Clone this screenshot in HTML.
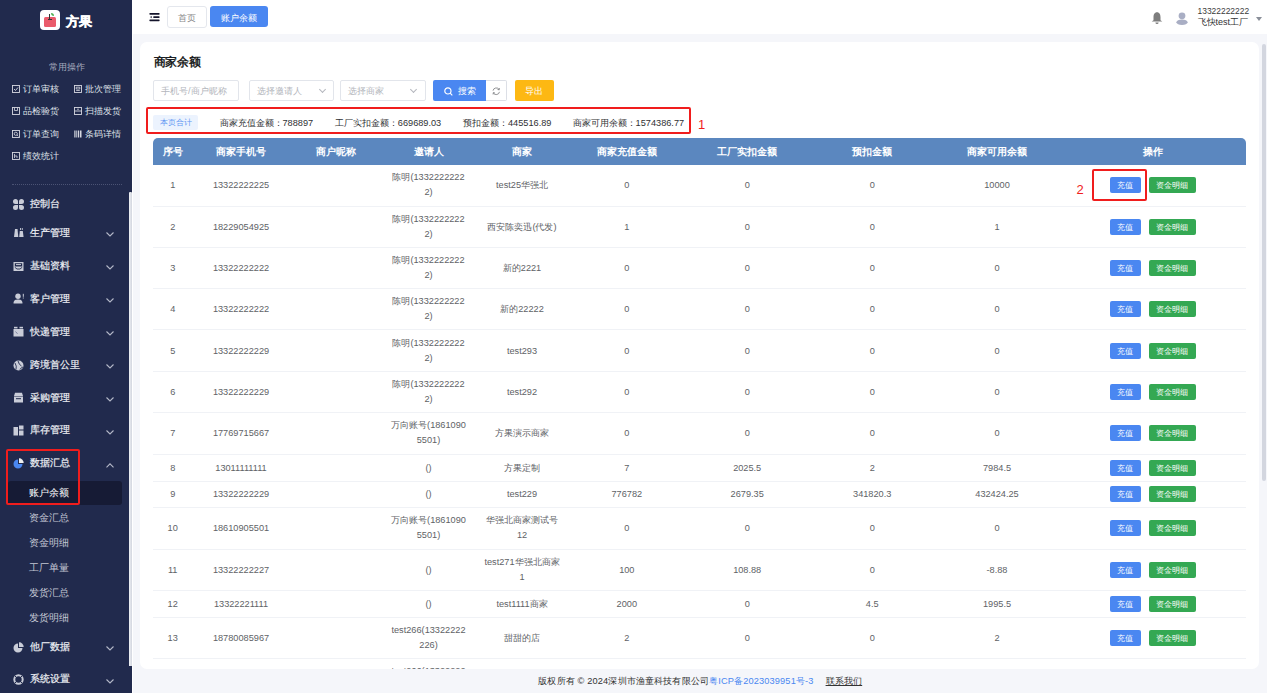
<!DOCTYPE html>
<html><head><meta charset="utf-8">
<style>
*{margin:0;padding:0;box-sizing:border-box}
html,body{width:1267px;height:693px;overflow:hidden;background:#f5f6fa;font-family:"Liberation Sans",sans-serif;color:#606266}
.abs{position:absolute}
#side{position:absolute;left:0;top:0;width:132px;height:693px;background:#212a4d;overflow:hidden}
#side .t{position:absolute;white-space:nowrap;line-height:12px}
.qo{font-size:9.3px;color:#dfe1e8}
.mi{font-size:9.9px;color:#eceef3;left:30.3px;-webkit-text-stroke:0.2px #eceef3}
.si{font-size:9.6px;color:#c9ccd8;left:29.3px}
.chev{position:absolute;left:107px;width:7px;height:7px;border-right:1px solid #aab0c4;border-bottom:1px solid #aab0c4;transform:rotate(45deg)}
#hdr{position:absolute;left:132px;top:0;width:1135px;height:33.5px;background:#fff}
#card{position:absolute;left:140px;top:42px;width:1119px;height:626.5px;background:#fff;border-radius:7px;overflow:hidden}
.inp{position:absolute;top:38.3px;height:21.2px;border:1px solid #e2e5eb;border-radius:2px;background:#fff;font-size:9.2px;color:#b3b6bc;line-height:21px;padding-left:7px;white-space:nowrap}
.tbl{position:absolute;left:13px;top:96.3px;width:1093px}
.th{position:absolute;left:0;top:0;width:1093px;height:26.4px;background:#5b87bf;border-radius:5px 5px 0 0;color:#fff;font-weight:bold;font-size:9.9px}
.th .c{top:1px;height:26.4px;line-height:26.4px}
.c{position:absolute;text-align:center;white-space:nowrap}
.tr{position:absolute;left:0;width:1093px;border-bottom:1px solid #f0f2f6;font-size:9.2px;color:#606266}
.tr .c{top:50%;transform:translateY(-50%);line-height:15px}
.ops{position:absolute;left:956.5px;top:50%;transform:translateY(-50%);height:16px;white-space:nowrap;font-size:0}
.b{display:inline-block;height:16px;line-height:16px;font-size:8.4px;color:#fff;border-radius:2px;text-align:center;vertical-align:top}
.bb{width:31px;background:#4a87f1}
.bg{width:46.7px;background:#34a853;margin-left:8.5px}
.red{position:absolute;border:2px solid #f01d1d;border-radius:2px}
</style></head><body>
<div id="side">
  <!-- logo -->
  <div class="abs" style="left:40px;top:10px;width:20px;height:20px;background:#fff;border-radius:4px"></div>
  <div class="abs" style="left:44px;top:16.5px;width:11.5px;height:10px;background:#ea5b6b;border-radius:1.5px"></div>
  <div class="abs" style="left:49px;top:13.5px;width:1.3px;height:5px;background:#333"></div>
  <div class="abs" style="left:47.5px;top:18.5px;width:4.5px;height:1px;background:#333"></div>
  <div class="abs" style="left:50.5px;top:13px;width:3.5px;height:2.5px;background:#4caf50;border-radius:0 3px 0 3px"></div>
  <div class="t" style="left:65.5px;top:15px;font-size:13px;font-weight:bold;color:#fff;line-height:14px;-webkit-text-stroke:0.45px #fff">方果</div>
  <div class="t" style="left:49px;top:61px;font-size:9.2px;color:#a4a9bd">常用操作</div>
  <svg class="abs" style="left:12px;top:85.0px" width="8" height="8" viewBox="0 0 8 8"><rect x="0.5" y="0.5" width="7" height="7" fill="none" stroke="#d5d7e0" stroke-width="0.9"/><path d="M2 4 L3.5 5.5 L6 2.5" fill="none" stroke="#d5d7e0" stroke-width="0.9"/></svg>
<div class="t qo" style="left:22.5px;top:83.0px">订单审核</div>
<svg class="abs" style="left:74px;top:85.0px" width="8" height="8" viewBox="0 0 8 8"><rect x="0.5" y="0.5" width="7" height="7" fill="none" stroke="#d5d7e0" stroke-width="0.9"/><path d="M2.2 2.2 H5.8 V4 H2.2Z M2.2 5.5 H5.8" fill="none" stroke="#d5d7e0" stroke-width="0.8"/></svg>
<div class="t qo" style="left:84.5px;top:83.0px">批次管理</div>
<svg class="abs" style="left:12px;top:107.4px" width="8" height="8" viewBox="0 0 8 8"><rect x="0.5" y="0.5" width="7" height="7" fill="none" stroke="#d5d7e0" stroke-width="0.9"/><path d="M2.5 0.5 V3.5 H5.5 V0.5" fill="none" stroke="#d5d7e0" stroke-width="0.8"/></svg>
<div class="t qo" style="left:22.5px;top:105.4px">品检验货</div>
<svg class="abs" style="left:74px;top:107.4px" width="8" height="8" viewBox="0 0 8 8"><rect x="0.5" y="0.5" width="7" height="7" fill="none" stroke="#d5d7e0" stroke-width="0.9"/><path d="M0.5 4 H7.5" stroke="#d5d7e0" stroke-width="0.9"/><path d="M3 2.2 H5" stroke="#d5d7e0" stroke-width="0.8"/></svg>
<div class="t qo" style="left:84.5px;top:105.4px">扫描发货</div>
<svg class="abs" style="left:12px;top:129.6px" width="8" height="8" viewBox="0 0 8 8"><rect x="0.5" y="0.5" width="7" height="7" fill="none" stroke="#d5d7e0" stroke-width="0.9"/><circle cx="3.8" cy="3.8" r="1.6" fill="none" stroke="#d5d7e0" stroke-width="0.8"/><path d="M5 5 L6.3 6.3" stroke="#d5d7e0" stroke-width="0.8"/></svg>
<div class="t qo" style="left:22.5px;top:127.6px">订单查询</div>
<svg class="abs" style="left:74px;top:129.6px" width="8" height="8" viewBox="0 0 8 8"><rect x="0.3" y="0.5" width="1.2" height="7" fill="#d5d7e0"/><rect x="2.3" y="0.5" width="0.8" height="7" fill="#d5d7e0"/><rect x="3.8" y="0.5" width="1.4" height="7" fill="#d5d7e0"/><rect x="6" y="0.5" width="1.5" height="7" fill="#d5d7e0"/></svg>
<div class="t qo" style="left:84.5px;top:127.6px">条码详情</div>
<svg class="abs" style="left:12px;top:152.0px" width="8" height="8" viewBox="0 0 8 8"><rect x="0.5" y="0.5" width="7" height="7" fill="none" stroke="#d5d7e0" stroke-width="0.9"/><path d="M2.5 2 V6 M2.5 4 H5 V6" fill="none" stroke="#d5d7e0" stroke-width="0.8"/></svg>
<div class="t qo" style="left:22.5px;top:150.0px">绩效统计</div>
  <div class="abs" style="left:12px;top:184px;width:110px;border-top:1px dotted #4b5374"></div>
  <div class="abs" style="left:7.5px;top:480.5px;width:114.5px;height:24.5px;background:#161b35;border-radius:3px"></div>
<svg class="abs" style="left:13.2px;top:198.5px" width="11" height="11" viewBox="0 0 11 11"><path d="M5 5 H2.5 A2.5 2.5 0 1 1 5 2.5Z M6 5 V2.5 A2.5 2.5 0 1 1 8.5 5Z M5 6 V8.5 A2.5 2.5 0 1 1 2.5 6Z M6 6 H8.5 A2.5 2.5 0 1 1 6 8.5Z" fill="#c9ccd8"/></svg>
<div class="t mi" style="top:197.8px">控制台</div>
<svg class="abs" style="left:13.2px;top:227.4px" width="11" height="11" viewBox="0 0 11 11"><path d="M1 10 L2 2 L4.5 2 L5.3 10Z" fill="#c9ccd8"/><path d="M6.2 10 L6.8 4 L9.8 4 L10.6 10Z" fill="#c9ccd8"/><rect x="7" y="1" width="0.9" height="2" fill="#c9ccd8"/><rect x="8.8" y="1" width="0.9" height="2" fill="#c9ccd8"/></svg>
<div class="t mi" style="top:226.7px">生产管理</div>
<svg class="abs" style="left:105.9px;top:232.1px" width="8" height="5" viewBox="0 0 8 5"><path d="M0.5 0.5 L4 4 L7.5 0.5" fill="none" stroke="#b4b8c8" stroke-width="1.1"/></svg>
<svg class="abs" style="left:13.2px;top:260.6px" width="11" height="11" viewBox="0 0 11 11"><path d="M0.5 1 H10.5 V10 H0.5Z M1.8 2.2 V5.5 H9.2 V2.2Z" fill="#c9ccd8" fill-rule="evenodd"/><path d="M3 3.6 H8" stroke="#c9ccd8" stroke-width="1"/><path d="M1.8 6.3 L4 8 H7 L9.2 6.3" fill="none" stroke="#212a4d" stroke-width="0.9"/></svg>
<div class="t mi" style="top:259.9px">基础资料</div>
<svg class="abs" style="left:105.9px;top:265.3px" width="8" height="5" viewBox="0 0 8 5"><path d="M0.5 0.5 L4 4 L7.5 0.5" fill="none" stroke="#b4b8c8" stroke-width="1.1"/></svg>
<svg class="abs" style="left:13.2px;top:293.3px" width="11" height="11" viewBox="0 0 11 11"><circle cx="5" cy="3.2" r="2.7" fill="#c9ccd8"/><path d="M0.5 10.5 C0.5 7 2.5 6.5 5 6.5 C7.5 6.5 9.5 7 9.5 10.5Z" fill="#c9ccd8"/><rect x="9.8" y="0.8" width="1" height="3" fill="#c9ccd8"/><rect x="9.8" y="4.5" width="1" height="1" fill="#c9ccd8"/></svg>
<div class="t mi" style="top:292.6px">客户管理</div>
<svg class="abs" style="left:105.9px;top:298.0px" width="8" height="5" viewBox="0 0 8 5"><path d="M0.5 0.5 L4 4 L7.5 0.5" fill="none" stroke="#b4b8c8" stroke-width="1.1"/></svg>
<svg class="abs" style="left:13.2px;top:326.4px" width="11" height="11" viewBox="0 0 11 11"><rect x="0.5" y="3" width="10" height="7.5" fill="#c9ccd8"/><rect x="1" y="0.8" width="3.5" height="1.6" fill="#c9ccd8"/><rect x="6.5" y="0.8" width="3.5" height="1.6" fill="#c9ccd8"/><path d="M2.5 5.5 L4.5 7.8" stroke="#6a7090" stroke-width="0.8"/></svg>
<div class="t mi" style="top:325.7px">快递管理</div>
<svg class="abs" style="left:105.9px;top:331.1px" width="8" height="5" viewBox="0 0 8 5"><path d="M0.5 0.5 L4 4 L7.5 0.5" fill="none" stroke="#b4b8c8" stroke-width="1.1"/></svg>
<svg class="abs" style="left:13.2px;top:359.5px" width="11" height="11" viewBox="0 0 11 11"><circle cx="5.5" cy="5.5" r="5" fill="#c9ccd8"/><path d="M2 3 Q4 6 3 9.5 M5 1 Q6 5 8.5 6 M7 9.5 Q8 7.5 10 7" fill="none" stroke="#212a4d" stroke-width="0.9"/></svg>
<div class="t mi" style="top:358.8px">跨境首公里</div>
<svg class="abs" style="left:105.9px;top:364.2px" width="8" height="5" viewBox="0 0 8 5"><path d="M0.5 0.5 L4 4 L7.5 0.5" fill="none" stroke="#b4b8c8" stroke-width="1.1"/></svg>
<svg class="abs" style="left:13.2px;top:392.3px" width="11" height="11" viewBox="0 0 11 11"><path d="M1 4 L2 0.8 H9 L10 4Z" fill="#c9ccd8"/><rect x="1" y="4.5" width="9" height="6" fill="#c9ccd8"/><rect x="3" y="6.2" width="5" height="1" fill="#212a4d"/></svg>
<div class="t mi" style="top:391.6px">采购管理</div>
<svg class="abs" style="left:105.9px;top:397.0px" width="8" height="5" viewBox="0 0 8 5"><path d="M0.5 0.5 L4 4 L7.5 0.5" fill="none" stroke="#b4b8c8" stroke-width="1.1"/></svg>
<svg class="abs" style="left:13.2px;top:425.1px" width="11" height="11" viewBox="0 0 11 11"><rect x="0.5" y="2" width="4.5" height="8.5" fill="#c9ccd8"/><rect x="6" y="0.5" width="4.5" height="4" fill="#c9ccd8"/><rect x="6" y="5.5" width="4.5" height="5" fill="#c9ccd8"/></svg>
<div class="t mi" style="top:424.4px">库存管理</div>
<svg class="abs" style="left:105.9px;top:429.8px" width="8" height="5" viewBox="0 0 8 5"><path d="M0.5 0.5 L4 4 L7.5 0.5" fill="none" stroke="#b4b8c8" stroke-width="1.1"/></svg>
<svg class="abs" style="left:13.2px;top:458.0px" width="11" height="11" viewBox="0 0 11 11"><path d="M5 1.5 A4.5 4.5 0 1 0 9.5 6 L5 6Z" fill="#4a87f1"/><path d="M6 0.3 A4.6 4.6 0 0 1 10.7 5 L6 5Z" fill="#f0f0f0"/></svg>
<div class="t mi" style="top:457.3px">数据汇总</div>
<svg class="abs" style="left:105.9px;top:462.7px" width="8" height="5" viewBox="0 0 8 5"><path d="M0.5 4.4 L4 0.9 L7.5 4.4" fill="none" stroke="#b4b8c8" stroke-width="1.1"/></svg>
<svg class="abs" style="left:13.2px;top:641.5px" width="11" height="11" viewBox="0 0 11 11"><path d="M5 1.5 A4.5 4.5 0 1 0 9.5 6 L5 6Z" fill="#c9ccd8"/><path d="M6 0.3 A4.6 4.6 0 0 1 10.7 5 L6 5Z" fill="#c9ccd8"/></svg>
<div class="t mi" style="top:640.8px">他厂数据</div>
<svg class="abs" style="left:105.9px;top:646.2px" width="8" height="5" viewBox="0 0 8 5"><path d="M0.5 0.5 L4 4 L7.5 0.5" fill="none" stroke="#b4b8c8" stroke-width="1.1"/></svg>
<svg class="abs" style="left:13.2px;top:673.9px" width="11" height="11" viewBox="0 0 11 11"><circle cx="5.5" cy="5.5" r="4.2" fill="none" stroke="#c9ccd8" stroke-width="2"/><path d="M2 2 L3.5 3.5 M9 2 L7.5 3.5 M2 9 L3.5 7.5 M9 9 L7.5 7.5" stroke="#212a4d" stroke-width="1"/></svg>
<div class="t mi" style="top:673.2px">系统设置</div>
<svg class="abs" style="left:105.9px;top:678.6px" width="8" height="5" viewBox="0 0 8 5"><path d="M0.5 0.5 L4 4 L7.5 0.5" fill="none" stroke="#b4b8c8" stroke-width="1.1"/></svg>
<div class="t si" style="top:486.9px;color:#ffffff">账户余额</div>
<div class="t si" style="top:511.9px;color:#c3c7d4">资金汇总</div>
<div class="t si" style="top:536.9px;color:#c3c7d4">资金明细</div>
<div class="t si" style="top:561.9px;color:#c3c7d4">工厂单量</div>
<div class="t si" style="top:586.8px;color:#c3c7d4">发货汇总</div>
<div class="t si" style="top:611.8px;color:#c3c7d4">发货明细</div>
  <div class="abs" style="left:129.2px;top:191.5px;width:2.7px;height:474.2px;background:linear-gradient(90deg,#eef0f4,#d3d6df);border-radius:1px 1px 0 0"></div>
  <div class="red" style="left:6px;top:448.5px;width:74px;height:56px"></div>
</div>
<div class="abs" style="left:132px;top:0;width:1.2px;height:693px;background:#fff"></div>
<div id="hdr">
  <svg class="abs" style="left:17px;top:12px" width="11" height="10" viewBox="0 0 11 10"><rect x="0.4" y="1" width="10.2" height="1.7" rx="0.6" fill="#14142b"/><rect x="4.2" y="4.3" width="6.4" height="1.6" rx="0.6" fill="#14142b"/><path d="M1 5.1 L2.7 3.9 L2.7 6.3Z" fill="#14142b"/><rect x="0.4" y="7.5" width="10.2" height="1.7" rx="0.6" fill="#14142b"/></svg>
  <div class="abs" style="left:35px;top:6px;width:40px;height:21.5px;border:1px solid #e4e7ed;border-radius:3px;font-size:9.2px;color:#888;text-align:center;line-height:22px">首页</div>
  <div class="abs" style="left:78px;top:6.3px;width:57.6px;height:21.2px;background:#4a87f1;border-radius:3px;font-size:9.2px;color:#fff;text-align:center;line-height:24px">账户余额</div>
  <!-- bell -->
  <svg class="abs" style="left:1019px;top:11px" width="12" height="14" viewBox="0 0 12 14"><path d="M6 1.2 C3.4 1.2 2.5 3.6 2.5 6 L2.5 9.3 L0.7 10.6 L11.3 10.6 L9.5 9.3 L9.5 6 C9.5 3.6 8.6 1.2 6 1.2Z" fill="#7d7d7d"/><path d="M4.4 11.4 L7.6 11.4 A1.6 1.5 0 0 1 4.4 11.4Z" fill="#7d7d7d"/></svg>
  <svg class="abs" style="left:1044px;top:12px" width="12" height="13" viewBox="0 0 12 13"><circle cx="6" cy="3.8" r="3.4" fill="#a9aec4"/><ellipse cx="6" cy="10.2" rx="5.6" ry="2.8" fill="#a9aec4"/></svg>
  <div class="abs" style="left:1065.5px;top:7px;font-size:8.45px;color:#3a3a3a;line-height:9px;white-space:nowrap">13322222222</div>
  <div class="abs" style="left:1065.5px;top:16.5px;font-size:9px;color:#333;line-height:11px;white-space:nowrap">飞快test工厂</div>
  <svg class="abs" style="left:1123.5px;top:17px" width="6" height="4" viewBox="0 0 6 4"><path d="M0 0L6 0L3 4Z" fill="#8a8f99"/></svg>
</div>
<div id="card">
  <div class="abs" style="left:13.5px;top:12.6px;font-size:11.6px;letter-spacing:-0.2px;font-weight:bold;color:#1d1f24;line-height:14px;white-space:nowrap">商家余额</div>
  <div class="inp" style="left:13px;width:85.6px">手机号/商户昵称</div>
  <div class="inp" style="left:108.5px;width:85.1px">选择邀请人<span style="position:absolute;left:70px;top:-1px;display:block;width:5px;height:5px;border-right:1px solid #b4b7be;border-bottom:1px solid #b4b7be;transform:translateY(7px) rotate(45deg)"></span></div>
  <div class="inp" style="left:200.4px;width:85.3px">选择商家<span style="position:absolute;left:70px;top:-1px;display:block;width:5px;height:5px;border-right:1px solid #b4b7be;border-bottom:1px solid #b4b7be;transform:translateY(7px) rotate(45deg)"></span></div>
  <div class="abs" style="left:292.9px;top:38.4px;width:53px;height:20.9px;background:#4a87f1;border-radius:2px 0 0 2px;color:#fff;font-size:9.2px;line-height:23.5px;white-space:nowrap">
    <svg class="abs" style="left:10.8px;top:6.8px" width="9" height="9" viewBox="0 0 9 9"><circle cx="3.9" cy="3.9" r="3.1" fill="none" stroke="#fff" stroke-width="1.2"/><path d="M6.2 6.2L8.3 8.3" stroke="#fff" stroke-width="1.2"/></svg>
    <span class="abs" style="left:25px;top:0">搜索</span>
  </div>
  <div class="abs" style="left:345.9px;top:38.4px;width:21.6px;height:20.9px;border:1px solid #dcdfe6;border-left:none;border-radius:0 2px 2px 0;background:#fff">
    <svg class="abs" style="left:6.3px;top:5.8px" width="8.5" height="8.5" viewBox="0 0 10 10"><path d="M1.2 4.3 A3.9 3.9 0 0 1 8.4 3" fill="none" stroke="#606266" stroke-width="0.8"/><path d="M8.8 5.7 A3.9 3.9 0 0 1 1.6 7" fill="none" stroke="#606266" stroke-width="0.8"/><path d="M8.7 1.2 L8.5 3.3 L6.5 3" fill="none" stroke="#606266" stroke-width="0.8"/><path d="M1.3 8.8 L1.5 6.7 L3.5 7" fill="none" stroke="#606266" stroke-width="0.8"/></svg>
  </div>
  <div class="abs" style="left:374.7px;top:38.4px;width:39.2px;height:20.9px;background:#fdb813;border-radius:2px;color:#fff;font-size:9.2px;line-height:23.5px;text-align:center">导出</div>
  <!-- summary -->
  <div class="red" style="left:6.2px;top:65px;width:544.6px;height:26.5px"></div>
  <div class="abs" style="left:13px;top:72.8px;width:45px;height:15.6px;background:#ecf3fe;border-radius:2px;color:#6398f3;font-size:8.4px;line-height:15.8px;text-align:center">本页合计</div>
  <div class="abs" style="left:79.5px;top:75px;font-size:9.2px;color:#303133;line-height:12px;white-space:nowrap">商家充值金额：788897</div>
  <div class="abs" style="left:194.8px;top:75px;font-size:9.2px;color:#303133;line-height:12px;white-space:nowrap">工厂实扣金额：669689.03</div>
  <div class="abs" style="left:323px;top:75px;font-size:9.2px;color:#303133;line-height:12px;white-space:nowrap">预扣金额：445516.89</div>
  <div class="abs" style="left:432.6px;top:75px;font-size:9.2px;color:#303133;line-height:12px;white-space:nowrap">商家可用余额：1574386.77</div>
  <div class="abs" style="left:558px;top:76px;font-size:13px;color:#f01d1d;line-height:14px">1</div>
  <div class="tbl">
    <div class="th"><div class="c" style="left:-35.3px;width:110px">序号</div><div class="c" style="left:33.0px;width:110px">商家手机号</div><div class="c" style="left:127.6px;width:110px">商户昵称</div><div class="c" style="left:220.5px;width:110px">邀请人</div><div class="c" style="left:314.0px;width:110px">商家</div><div class="c" style="left:418.8px;width:110px">商家充值金额</div><div class="c" style="left:539.2px;width:110px">工厂实扣金额</div><div class="c" style="left:664.2px;width:110px">预扣金额</div><div class="c" style="left:789.0px;width:110px">商家可用余额</div><div class="c" style="left:944.7px;width:110px">操作</div></div>
    <div class="tr" style="top:26.4px;height:42.0px"><div class="c" style="left:-35.3px;width:110px">1</div><div class="c" style="left:33.0px;width:110px">13322222225</div><div class="c" style="left:220.5px;width:110px">陈明(1332222222<br>2)</div><div class="c" style="left:314.0px;width:110px">test25华强北</div><div class="c" style="left:418.8px;width:110px">0</div><div class="c" style="left:539.2px;width:110px">0</div><div class="c" style="left:664.2px;width:110px">0</div><div class="c" style="left:789.0px;width:110px">10000</div><div class="ops"><span class="b bb">充值</span><span class="b bg">资金明细</span></div></div>
<div class="tr" style="top:68.4px;height:41.3px"><div class="c" style="left:-35.3px;width:110px">2</div><div class="c" style="left:33.0px;width:110px">18229054925</div><div class="c" style="left:220.5px;width:110px">陈明(1332222222<br>2)</div><div class="c" style="left:314.0px;width:110px">西安陈奕迅(代发)</div><div class="c" style="left:418.8px;width:110px">1</div><div class="c" style="left:539.2px;width:110px">0</div><div class="c" style="left:664.2px;width:110px">0</div><div class="c" style="left:789.0px;width:110px">1</div><div class="ops"><span class="b bb">充值</span><span class="b bg">资金明细</span></div></div>
<div class="tr" style="top:109.7px;height:41.0px"><div class="c" style="left:-35.3px;width:110px">3</div><div class="c" style="left:33.0px;width:110px">13322222222</div><div class="c" style="left:220.5px;width:110px">陈明(1332222222<br>2)</div><div class="c" style="left:314.0px;width:110px">新的2221</div><div class="c" style="left:418.8px;width:110px">0</div><div class="c" style="left:539.2px;width:110px">0</div><div class="c" style="left:664.2px;width:110px">0</div><div class="c" style="left:789.0px;width:110px">0</div><div class="ops"><span class="b bb">充值</span><span class="b bg">资金明细</span></div></div>
<div class="tr" style="top:150.7px;height:41.5px"><div class="c" style="left:-35.3px;width:110px">4</div><div class="c" style="left:33.0px;width:110px">13322222222</div><div class="c" style="left:220.5px;width:110px">陈明(1332222222<br>2)</div><div class="c" style="left:314.0px;width:110px">新的22222</div><div class="c" style="left:418.8px;width:110px">0</div><div class="c" style="left:539.2px;width:110px">0</div><div class="c" style="left:664.2px;width:110px">0</div><div class="c" style="left:789.0px;width:110px">0</div><div class="ops"><span class="b bb">充值</span><span class="b bg">资金明细</span></div></div>
<div class="tr" style="top:192.2px;height:41.4px"><div class="c" style="left:-35.3px;width:110px">5</div><div class="c" style="left:33.0px;width:110px">13322222229</div><div class="c" style="left:220.5px;width:110px">陈明(1332222222<br>2)</div><div class="c" style="left:314.0px;width:110px">test293</div><div class="c" style="left:418.8px;width:110px">0</div><div class="c" style="left:539.2px;width:110px">0</div><div class="c" style="left:664.2px;width:110px">0</div><div class="c" style="left:789.0px;width:110px">0</div><div class="ops"><span class="b bb">充值</span><span class="b bg">资金明细</span></div></div>
<div class="tr" style="top:233.6px;height:41.4px"><div class="c" style="left:-35.3px;width:110px">6</div><div class="c" style="left:33.0px;width:110px">13322222229</div><div class="c" style="left:220.5px;width:110px">陈明(1332222222<br>2)</div><div class="c" style="left:314.0px;width:110px">test292</div><div class="c" style="left:418.8px;width:110px">0</div><div class="c" style="left:539.2px;width:110px">0</div><div class="c" style="left:664.2px;width:110px">0</div><div class="c" style="left:789.0px;width:110px">0</div><div class="ops"><span class="b bb">充值</span><span class="b bg">资金明细</span></div></div>
<div class="tr" style="top:275.0px;height:41.4px"><div class="c" style="left:-35.3px;width:110px">7</div><div class="c" style="left:33.0px;width:110px">17769715667</div><div class="c" style="left:220.5px;width:110px">万向账号(1861090<br>5501)</div><div class="c" style="left:314.0px;width:110px">方果演示商家</div><div class="c" style="left:418.8px;width:110px">0</div><div class="c" style="left:539.2px;width:110px">0</div><div class="c" style="left:664.2px;width:110px">0</div><div class="c" style="left:789.0px;width:110px">0</div><div class="ops"><span class="b bb">充值</span><span class="b bg">资金明细</span></div></div>
<div class="tr" style="top:316.4px;height:27.1px"><div class="c" style="left:-35.3px;width:110px">8</div><div class="c" style="left:33.0px;width:110px">13011111111</div><div class="c" style="left:220.5px;width:110px">()</div><div class="c" style="left:314.0px;width:110px">方果定制</div><div class="c" style="left:418.8px;width:110px">7</div><div class="c" style="left:539.2px;width:110px">2025.5</div><div class="c" style="left:664.2px;width:110px">2</div><div class="c" style="left:789.0px;width:110px">7984.5</div><div class="ops"><span class="b bb">充值</span><span class="b bg">资金明细</span></div></div>
<div class="tr" style="top:343.5px;height:26.3px"><div class="c" style="left:-35.3px;width:110px">9</div><div class="c" style="left:33.0px;width:110px">13322222229</div><div class="c" style="left:220.5px;width:110px">()</div><div class="c" style="left:314.0px;width:110px">test229</div><div class="c" style="left:418.8px;width:110px">776782</div><div class="c" style="left:539.2px;width:110px">2679.35</div><div class="c" style="left:664.2px;width:110px">341820.3</div><div class="c" style="left:789.0px;width:110px">432424.25</div><div class="ops"><span class="b bb">充值</span><span class="b bg">资金明细</span></div></div>
<div class="tr" style="top:369.8px;height:41.7px"><div class="c" style="left:-35.3px;width:110px">10</div><div class="c" style="left:33.0px;width:110px">18610905501</div><div class="c" style="left:220.5px;width:110px">万向账号(1861090<br>5501)</div><div class="c" style="left:314.0px;width:110px">华强北商家测试号<br>12</div><div class="c" style="left:418.8px;width:110px">0</div><div class="c" style="left:539.2px;width:110px">0</div><div class="c" style="left:664.2px;width:110px">0</div><div class="c" style="left:789.0px;width:110px">0</div><div class="ops"><span class="b bb">充值</span><span class="b bg">资金明细</span></div></div>
<div class="tr" style="top:411.5px;height:41.0px"><div class="c" style="left:-35.3px;width:110px">11</div><div class="c" style="left:33.0px;width:110px">13322222227</div><div class="c" style="left:220.5px;width:110px">()</div><div class="c" style="left:314.0px;width:110px">test271华强北商家<br>1</div><div class="c" style="left:418.8px;width:110px">100</div><div class="c" style="left:539.2px;width:110px">108.88</div><div class="c" style="left:664.2px;width:110px">0</div><div class="c" style="left:789.0px;width:110px">-8.88</div><div class="ops"><span class="b bb">充值</span><span class="b bg">资金明细</span></div></div>
<div class="tr" style="top:452.5px;height:26.9px"><div class="c" style="left:-35.3px;width:110px">12</div><div class="c" style="left:33.0px;width:110px">13322221111</div><div class="c" style="left:220.5px;width:110px">()</div><div class="c" style="left:314.0px;width:110px">test1111商家</div><div class="c" style="left:418.8px;width:110px">2000</div><div class="c" style="left:539.2px;width:110px">0</div><div class="c" style="left:664.2px;width:110px">4.5</div><div class="c" style="left:789.0px;width:110px">1995.5</div><div class="ops"><span class="b bb">充值</span><span class="b bg">资金明细</span></div></div>
<div class="tr" style="top:479.4px;height:41.0px"><div class="c" style="left:-35.3px;width:110px">13</div><div class="c" style="left:33.0px;width:110px">18780085967</div><div class="c" style="left:220.5px;width:110px">test266(13322222<br>226)</div><div class="c" style="left:314.0px;width:110px">甜甜的店</div><div class="c" style="left:418.8px;width:110px">2</div><div class="c" style="left:539.2px;width:110px">0</div><div class="c" style="left:664.2px;width:110px">0</div><div class="c" style="left:789.0px;width:110px">2</div><div class="ops"><span class="b bb">充值</span><span class="b bg">资金明细</span></div></div>
<div class="tr" style="top:520.4px;height:41.3px"><div class="c" style="left:220.5px;width:110px">test266(13322222<br>226)</div></div>
  </div>
  <div class="red" style="left:952.2px;top:126.6px;width:55px;height:32.1px"></div>
  <div class="abs" style="left:936.5px;top:140.5px;font-size:13px;color:#f01d1d;line-height:14px">2</div>
</div>
<div class="abs" style="left:538.3px;top:675px;font-size:9.23px;letter-spacing:0.15px;color:#333;line-height:12px;white-space:nowrap">版权所有 © 2024深圳市渔童科技有限公司<span style="color:#4a87f1">粤ICP备2023039951号-3</span><span style="display:inline-block;width:12px"></span><span style="text-decoration:underline">联系我们</span></div>
<div class="abs" style="left:1262px;top:43.6px;width:3.8px;height:437px;background:#d3d6df;border-radius:2px"></div>
</body></html>
